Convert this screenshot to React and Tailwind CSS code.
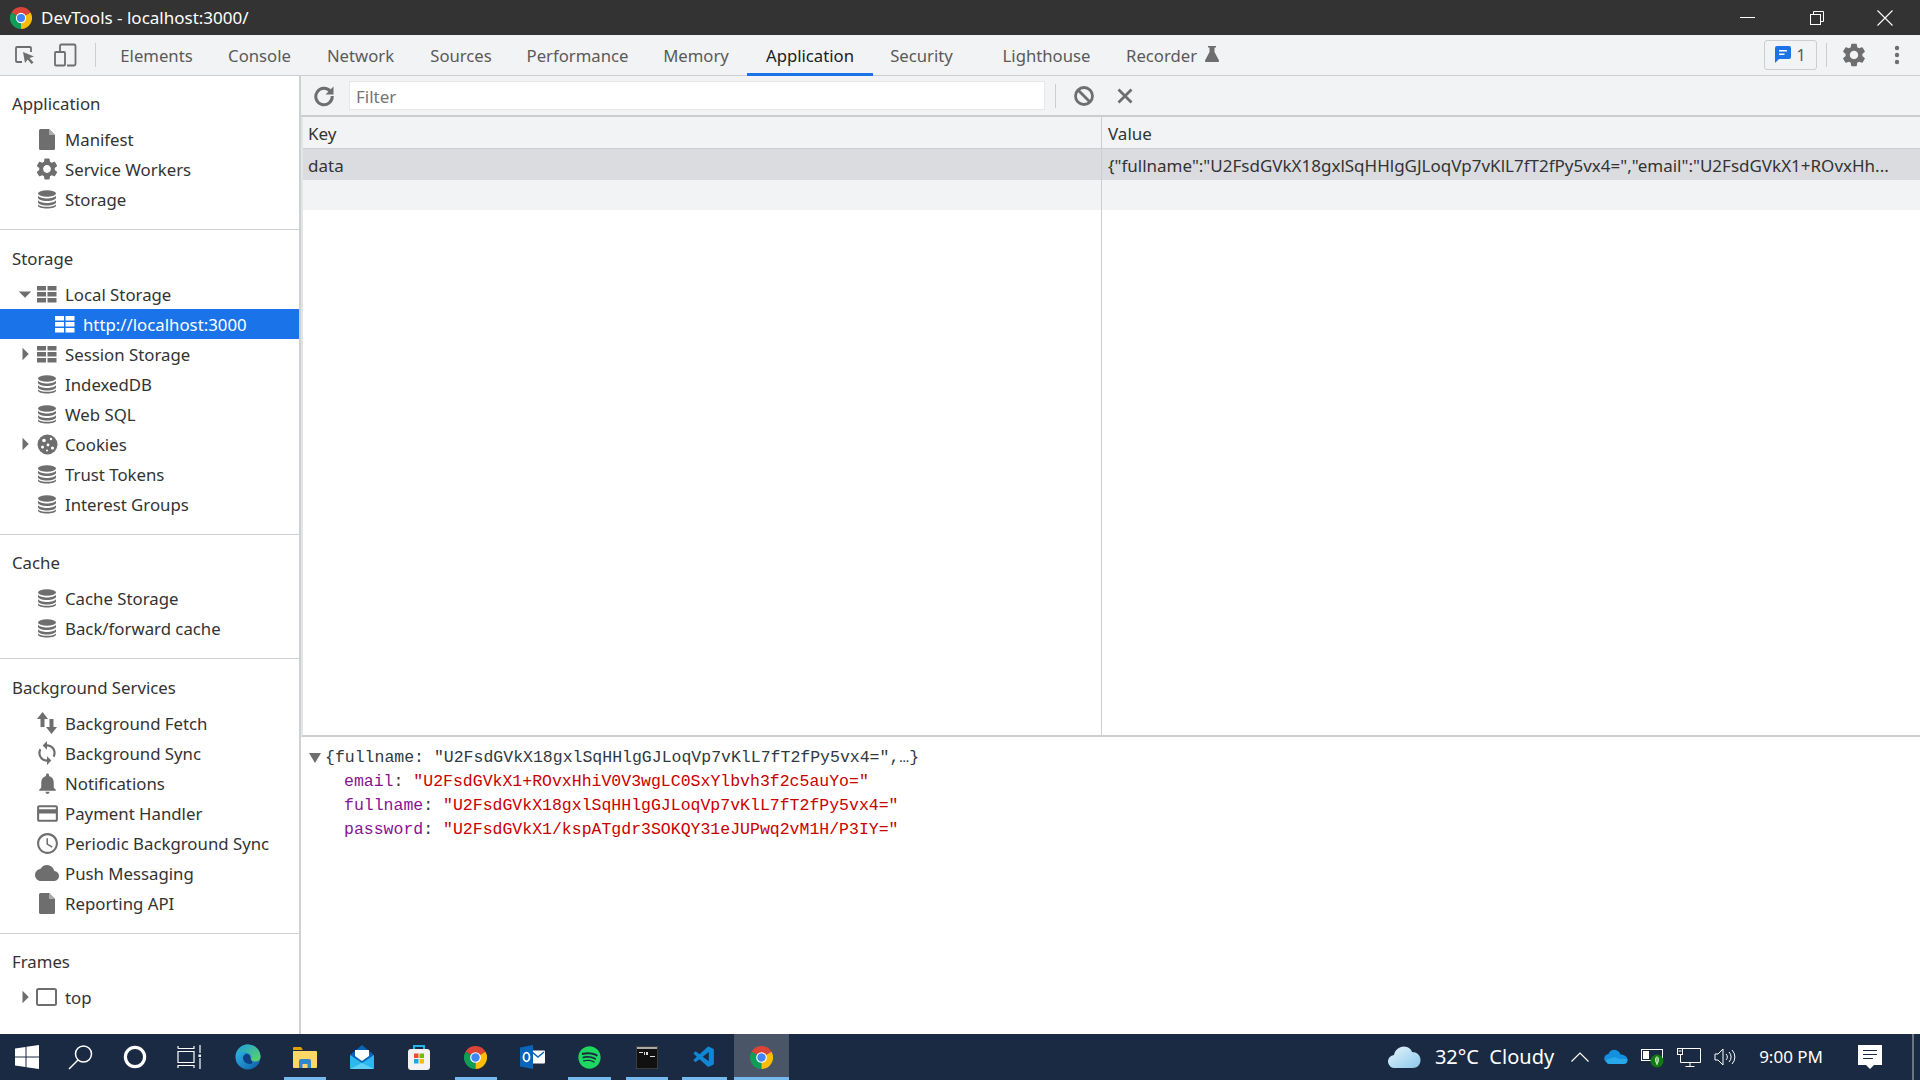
import React from "react";
import { MdSettings, MdSync, MdNotifications, MdOutlineCreditCard, MdAccessTime, MdCloud, MdArrowDropDown, MdArrowRight } from "react-icons/md";
import { FaSpotify } from "react-icons/fa";
import { VscVscode } from "react-icons/vsc";

const G = "#6e6e6e";
const Db = ({ c = G }) => (
  <svg width="20" height="20" viewBox="0 0 20 20" fill={c}>
    <ellipse cx="10" cy="4.5" rx="9" ry="3.2" />
    <path d="M1 6.8v2c0 1.8 4 3.2 9 3.2s9-1.4 9-3.2v-2c-1.2 1.7-5 2.7-9 2.7s-7.800-1-9-2.700z" />
    <path d="M1 11.300v2c0 1.800 4 3.200 9 3.200s9-1.400 9-3.200v-2c-1.200 1.700-5 2.700-9 2.700s-7.800-1-9-2.700z" />
    <path d="M1 15.500v1c0 1.800 4 3 9 3s9-1.200 9-3v-1c-1.200 1.500-5 2.300-9 2.300s-7.800-.8-9-2.300z" />
  </svg>
);
const Tbl = ({ c = G }) => (
  <svg width="20" height="18" viewBox="0 0 20 18" fill={c}>
    <rect x="0" y="1" width="9" height="4.500" /><rect x="10.500" y="1" width="9" height="4.500" />
    <rect x="0" y="7" width="9" height="4.500" /><rect x="10.500" y="7" width="9" height="4.500" />
    <rect x="0" y="13" width="9" height="4.500" /><rect x="10.500" y="13" width="9" height="4.500" />
  </svg>
);
const Cookie = () => (
  <svg width="21" height="21" viewBox="0 0 21 21">
    <circle cx="10.500" cy="10.500" r="10" fill={G} />
    <circle cx="7" cy="6.500" r="1.800" fill="#fff" /><circle cx="14" cy="5" r="1.200" fill="#fff" />
    <circle cx="5.500" cy="13" r="1.500" fill="#fff" /><circle cx="11" cy="11" r="1.400" fill="#fff" />
    <circle cx="15.500" cy="14" r="1.600" fill="#fff" /><circle cx="10" cy="16.500" r="1" fill="#fff" />
  </svg>
);
const Frame = () => (
  <svg width="21" height="18" viewBox="0 0 21 18" fill="none" stroke={G} strokeWidth="2" className="-ml-[1px]">
    <rect x="1" y="1" width="19" height="16" rx="1.500" />
  </svg>
);
const FileIc = () => (
  <svg width="16" height="21" viewBox="0 0 16 21" fill={G}><path d="M1.500 0H10l6 6v13.500a1.500 1.500 0 0 1-1.500 1.500h-13A1.500 1.500 0 0 1 0 19.500v-18A1.500 1.500 0 0 1 1.500 0z" /><path d="M10 0v6h6z" fill="#aaa" /></svg>
);
const Swap = () => (
  <svg width="20" height="22" viewBox="0 0 20 22" fill={G}>
    <path d="M5.500 0L11 7H7.500v8h-4V7H0zM14.500 22L9 15h3.500V7h4v8H20z" />
  </svg>
);
const Mi = ({ I, size = 22 }) => <I size={size} color={G} />;

const sections = [
  { title: "Application", pt: "pt-[13px]", pb: "pb-[15px]", gap: "mt-[5px]", rows: [
    { t: "Manifest", i: <FileIc /> },
    { t: "Service Workers", i: <Mi I={MdSettings} size={26} /> },
    { t: "Storage", i: <Db /> },
  ]},
  { title: "Storage", pt: "pt-[14px]", pb: "pb-[15px]", gap: "mt-[5px]", rows: [
    { t: "Local Storage", i: <Tbl />, a: "down" },
    { t: "http://localhost:3000", i: <Tbl c="#fff" />, sel: true },
    { t: "Session Storage", i: <Tbl />, a: "right" },
    { t: "IndexedDB", i: <Db /> },
    { t: "Web SQL", i: <Db /> },
    { t: "Cookies", i: <Cookie />, a: "right" },
    { t: "Trust Tokens", i: <Db /> },
    { t: "Interest Groups", i: <Db /> },
  ]},
  { title: "Cache", pt: "pt-[13px]", pb: "pb-[15px]", gap: "mt-[5px]", rows: [
    { t: "Cache Storage", i: <Db /> },
    { t: "Back/forward cache", i: <Db /> },
  ]},
  { title: "Background Services", pt: "pt-[14px]", pb: "pb-[15px]", gap: "mt-[5px]", rows: [
    { t: "Background Fetch", i: <Swap /> },
    { t: "Background Sync", i: <Mi I={MdSync} size={26} /> },
    { t: "Notifications", i: <Mi I={MdNotifications} size={25} /> },
    { t: "Payment Handler", i: <Mi I={MdOutlineCreditCard} size={25} /> },
    { t: "Periodic Background Sync", i: <Mi I={MdAccessTime} size={25} /> },
    { t: "Push Messaging", i: <Mi I={MdCloud} size={24} /> },
    { t: "Reporting API", i: <FileIc /> },
  ]},
  { title: "Frames", pt: "pt-[13px]", pb: "", gap: "mt-[5px]", last: true, rows: [
    { t: "top", i: <Frame />, a: "right" },
  ]},
];

const Row = ({ r }) => (
  <div className={`flex items-center h-[30px] text-[16.800px] whitespace-nowrap ${r.sel ? "bg-[#1a73e8] text-white" : "text-[#333]"}`}>
    <div className="w-[36px] flex justify-end shrink-0">
      {r.a === "down" && <MdArrowDropDown size={30} color={G} className="-mr-[4px]" />}
      {r.a === "right" && <MdArrowRight size={30} color={G} className="-mr-[4px]" />}
    </div>
    <div className={`w-[22px] flex justify-center items-center shrink-0 [&>svg]:shrink-0 ${r.sel ? "ml-[18px]" : ""}`}>{r.i}</div>
    <span className="ml-[7px] pt-[1px]">{r.t}</span>
  </div>
);

const Section = ({ s }) => (
  <div className={`${s.pt} ${s.pb} ${s.last ? "" : "border-b border-[#cfd0d3]"}`}>
    <div className="h-[30px] flex items-center pl-[12px] text-[16.800px] text-[#333]">{s.title}</div>
    <div className={s.gap}>{s.rows.map((r) => <Row key={r.t} r={r} />)}</div>
  </div>
);

const Chrome = ({ size = 24 }) => (
  <svg width={size} height={size} viewBox="0 0 24 24">
    <path d="M12 12L1.600 6A12 12 0 0 1 22.400 6z" fill="#db4437" />
    <path d="M12 12L12 24A12 12 0 0 1 1.600 6z" fill="#0f9d58" />
    <path d="M12 12L22.400 6A12 12 0 0 1 12 24z" fill="#fbbc05" />
    <circle cx="12" cy="12" r="5.600" fill="#fff" />
    <circle cx="12" cy="12" r="4.400" fill="#4285f4" />
  </svg>
);

const tabs = [
  ["Elements", "w-[107px]"], ["Console", "w-[99px]"], ["Network", "w-[103px]"], ["Sources", "w-[98px]"],
  ["Performance", "w-[135px]"], ["Memory", "w-[102px]"], ["Application", "w-[126px]"], ["Security", "w-[97px]"],
  ["Lighthouse", "w-[153px]"],
];

const Tab = ({ t, w }) => (
  <div className={`${w} h-full flex items-center justify-center relative text-[16.700px] pt-[1px] ${t === "Application" ? "text-[#202124]" : "text-[#5a5a5a]"}`}>
    {t}
    {t === "Application" && <div className="absolute left-0 right-0 -bottom-px h-[3px] bg-[#1a73e8]" />}
  </div>
);

const Slot = ({ children, line, active, w = "w-[57px]" }) => (
  <div className={`${w} h-full flex items-center justify-center relative shrink-0 ${active ? "bg-[#4a5568]" : ""}`}>
    {children}
    {line && <div className={`absolute bottom-0 h-[3px] bg-[#76b9ed] ${line}`} />}
  </div>
);

const Key = ({ k, v }) => (
  <div className="h-[24px] flex items-center pl-[43px] whitespace-pre">
    <span className="text-[#881391]">{k}</span><span className="text-[#303942]">: </span><span className="text-[#c80000]">{v}</span>
  </div>
);

export default function App() {
  return (
    <div className="w-[1920px] h-[1080px] overflow-hidden flex flex-col bg-white font-['Noto_Sans',sans-serif]">
      {/* Title bar */}
      <div className="h-[35px] shrink-0 bg-[#333333] flex items-center text-white relative">
        <div className="ml-[10px] flex"><Chrome size={22} /></div>
        <span className="ml-[9px] text-[17px]">DevTools - localhost:3000/</span>
        <div className="ml-auto flex items-center h-full">
          <div className="w-[15px] h-px bg-white mr-[54px]" />
          <svg width="16" height="16" viewBox="0 0 16 16" fill="none" stroke="#fff" className="mr-[52px]">
            <rect x="1.500" y="4.500" width="10" height="10" /><path d="M4.500 4.500V1.500h10v10h-3" />
          </svg>
          <svg width="16" height="16" viewBox="0 0 16 16" stroke="#fff" strokeWidth="1.100" className="mr-[27px]"><path d="M.5.5l15 15M15.500.5l-15 15" /></svg>
        </div>
      </div>
      {/* Toolbar */}
      <div className="h-[41px] shrink-0 bg-[#f1f3f4] border-b border-[#cbcdd1] flex items-center">
        <svg width="22" height="22" viewBox="0 0 22 22" className="ml-[14px]" fill="none">
          <path d="M8 18H3a1 1 0 0 1-1-1V4a1 1 0 0 1 1-1h13a1 1 0 0 1 1 1v4" stroke={G} strokeWidth="1.800" />
          <path d="M9 8l11 4.500-4.500 1.500 4 4.500-2 1.500-3.800-4.500L11 19z" fill={G} />
        </svg>
        <svg width="24" height="24" viewBox="0 0 24 24" className="ml-[17px]" fill="none" stroke={G} strokeWidth="1.800">
          <path d="M7 8V3a1.500 1.500 0 0 1 1.500-1.500H21A1.500 1.500 0 0 1 22.500 3v18a1.500 1.500 0 0 1-1.500 1.500H14" />
          <rect x="2" y="9" width="10" height="13.500" rx="1" />
        </svg>
        <div className="w-px h-[24px] bg-[#cbcdd1] ml-[18px] mr-[7px]" />
        <div className="flex h-full items-center">
          {tabs.map(([t, w]) => <Tab key={t} t={t} w={w} />)}
          <div className="w-[120px] h-full flex items-center pl-[3px] pt-[1px] text-[16.700px] text-[#5a5a5a]">
            Recorder
            <svg width="14" height="16" viewBox="0 0 14 16" fill={G} className="ml-[8px] -mt-[3px] shrink-0"><path d="M3 0h8v1.500H9.500v4.500L14 14.500A1 1 0 0 1 13 16H1a1 1 0 0 1-1-1.500L4.500 6V1.500H3z" /></svg>
          </div>
        </div>
        <div className="ml-auto h-[30px] w-[53px] border border-[#cbcdd1] rounded-[3px] flex items-center justify-center gap-[5px] text-[#5a5a5a] text-[16px]">
          <svg width="16" height="18" viewBox="0 0 16 18" fill="#1a73e8"><path d="M2 0h12a2 2 0 0 1 2 2v9a2 2 0 0 1-2 2H4l-4 4V2a2 2 0 0 1 2-2z" /><path d="M4 4h8v1.500H4zM4 7.500h5.500V9H4z" fill="#fff" /></svg>
          1
        </div>
        <div className="w-px h-[24px] bg-[#cbcdd1] ml-[9px]" />
        <MdSettings size={28} color={G} className="ml-[13px]" />
        <svg width="6" height="20" viewBox="0 0 6 20" fill={G} className="ml-[26px] mr-[20px]"><circle cx="3" cy="3" r="2.200" /><circle cx="3" cy="10" r="2.200" /><circle cx="3" cy="17" r="2.200" /></svg>
      </div>
      {/* Main */}
      <div className="flex-1 flex min-h-0">
        <div className="w-[301px] shrink-0 border-r-2 border-[#cfd0d3] overflow-hidden">
          {sections.map((s) => <Section key={s.title} s={s} />)}
        </div>
        <div className="flex-1 min-w-0 flex flex-col">
          <div className="h-[41px] shrink-0 bg-[#f1f3f4] border-b-2 border-[#cbcdd1] flex items-center text-[#5a5a5a]">
            <svg width="22" height="22" viewBox="0 0 22 22" fill="none" className="ml-[12px] shrink-0">
              <path d="M17.500 6.500A8.200 8.200 0 1 0 19.200 11" stroke={G} strokeWidth="3" />
              <path d="M20.500 1.500V9.500H12.500z" fill={G} />
            </svg>
            <div className="ml-[14px] w-[696px] h-[29px] bg-white border border-[#e6e7e9] flex items-center pl-[6px] pt-[2px] text-[17px] text-[#757575]">Filter</div>
            <div className="w-px h-[24px] bg-[#cbcdd1] ml-[10px]" />
            <svg width="22" height="22" viewBox="0 0 22 22" fill="none" stroke={G} strokeWidth="2.800" className="ml-[17px] shrink-0">
              <circle cx="11" cy="11" r="8.500" /><path d="M5 5l12 12" />
            </svg>
            <svg width="16" height="16" viewBox="0 0 16 16" stroke={G} strokeWidth="2.800" className="ml-[22px] shrink-0"><path d="M1.500 1.500l13 13M14.500 1.500l-13 13" /></svg>
          </div>
          <div className="h-[620px] shrink-0 border-b-2 border-[#cbcdd1] border-l-2 border-l-[#e4e5e7] flex flex-col text-[17px] text-[#333]">
            <div className="h-[32px] bg-[#f1f3f4] border-b border-[#cbcdd1] flex items-center shrink-0">
              <div className="w-[799px] pl-[5px] pt-[2px] border-r border-[#cbcdd1] h-full flex items-center">Key</div>
              <div className="pl-[6px] pt-[2px]">Value</div>
            </div>
            <div className="h-[31px] bg-[#dadce0] flex items-center shrink-0 whitespace-nowrap overflow-hidden">
              <div className="w-[799px] pl-[5px] pt-[2px] border-r border-[#cbcdd1] h-full flex items-center shrink-0">data</div>
              <div className="pl-[6px] pt-[2px]">{`{"fullname":"U2FsdGVkX18gxlSqHHlgGJLoqVp7vKlL7fT2fPy5vx4=","email":"U2FsdGVkX1+ROvxHh...`}</div>
            </div>
            <div className="h-[30px] bg-[#f1f3f4] flex shrink-0">
              <div className="w-[799px] border-r border-[#cbcdd1]" />
            </div>
            <div className="flex-1 flex"><div className="w-[799px] border-r border-[#cbcdd1]" /></div>
          </div>
          <div className="flex-1 pt-[9px] font-['Liberation_Mono',monospace] text-[16.500px] text-[#303942]">
            <div className="h-[24px] flex items-center whitespace-pre">
              <svg width="12" height="10" viewBox="0 0 12 10" fill={G} className="ml-[8px] mr-[4px]"><path d="M0 0h12L6 10z" /></svg>
              {`{fullname: "U2FsdGVkX18gxlSqHHlgGJLoqVp7vKlL7fT2fPy5vx4=",…}`}
            </div>
            <Key k="email" v={`"U2FsdGVkX1+ROvxHhiV0V3wgLC0SxYlbvh3f2c5auYo="`} />
            <Key k="fullname" v={`"U2FsdGVkX18gxlSqHHlgGJLoqVp7vKlL7fT2fPy5vx4="`} />
            <Key k="password" v={`"U2FsdGVkX1/kspATgdr3SOKQY31eJUPwq2vM1H/P3IY="`} />
          </div>
        </div>
      </div>
      {/* Taskbar */}
      <div className="h-[46px] shrink-0 bg-[#1a2a42] flex items-center text-white">
        <Slot w="w-[54px]">
          <svg width="24" height="24" viewBox="0 0 24 24" fill="#fff"><path d="M0 3.500l10.500-1.500v9.500H0zM11.500 1.800L24 0v11.500H11.500zM0 12.500h10.500V22L0 20.500zM11.500 12.500H24V24l-12.500-1.800z" /></svg>
        </Slot>
        <Slot w="w-[54px]">
          <svg width="26" height="26" viewBox="0 0 26 26" fill="none" stroke="#fff" strokeWidth="1.500"><circle cx="15.500" cy="10" r="8" /><path d="M10 16L1 25" /></svg>
        </Slot>
        <Slot w="w-[54px]">
          <svg width="24" height="24" viewBox="0 0 24 24" fill="none" stroke="#fff" strokeWidth="3.200"><circle cx="12" cy="12" r="9.600" /></svg>
        </Slot>
        <Slot w="w-[54px]">
          <svg width="24" height="24" viewBox="0 0 24 24" fill="none" stroke="#fff" strokeWidth="1.200"><path d="M1 3.500V1M17 1v2.500H1M1 6.500h16v11H1zM1 23v-2.500h16V23M23 0v8M23 13v11" /><rect x="21.500" y="9.500" width="3" height="2.500" fill="#fff" stroke="none" /></svg>
        </Slot>
        <div className="w-[3px] shrink-0" />
        <Slot>
          <svg width="26" height="26" viewBox="0 0 26 26">
            <defs>
              <linearGradient id="edgeA" x1="0" y1="0" x2="1" y2="1"><stop offset="0" stopColor="#35c1f1" /><stop offset="1" stopColor="#0c59a4" /></linearGradient>
              <linearGradient id="edgeB" x1="0" y1="0" x2="1" y2="1"><stop offset="0" stopColor="#1b9de2" /><stop offset="1" stopColor="#5fd65f" /></linearGradient>
            </defs>
            <circle cx="13" cy="13" r="12.500" fill="url(#edgeA)" />
            <path d="M1 10C3 3 8 .5 13 .5c7 0 12.500 5.500 12.500 12 0 3-2 5-5.500 5-3 0-5-1-5-2.500 2-1 2-3-.5-5C11 7.500 5 6 1 10z" fill="url(#edgeB)" />
            <path d="M8 14c0-3 3-5 5-4 3 1 2 5 4 7 1 1.500 0 3-2 3-4 0-7-3-7-6z" fill="#0f3f86" />
          </svg>
        </Slot>
        <Slot line="w-[42px]">
          <svg width="24" height="23" viewBox="0 0 24 23">
            <path d="M0 2a1 1 0 0 1 1-1h7l2 3H0z" fill="#e0a000" />
            <path d="M0 5h23a1 1 0 0 1 1 1v15a1 1 0 0 1-1 1H1a1 1 0 0 1-1-1z" fill="#fcd767" />
            <path d="M6 22v-7a2 2 0 0 1 2-2h8a2 2 0 0 1 2 2v7h-3.500v-4h-5v4z" fill="#2f88d0" />
          </svg>
        </Slot>
        <Slot>
          <svg width="24" height="24" viewBox="0 0 24 24">
            <path d="M12 0L24 10v13H0V10z" fill="#0a64b8" />
            <path d="M5 5h14v6l-7 5-7-5z" fill="#fff" />
            <path d="M0 10l12 8 12-8v13a1 1 0 0 1-1 1H1a1 1 0 0 1-1-1z" fill="#2cb7ee" />
            <path d="M0 24l12-6 12 6z" fill="#5fd0f5" />
          </svg>
        </Slot>
        <Slot>
          <svg width="24" height="27" viewBox="0 0 24 27">
            <path d="M7 6V2h10v4" fill="none" stroke="#22b5ea" strokeWidth="2" />
            <rect x="1" y="5" width="22" height="21" rx="3" fill="#f2f2f2" />
            <rect x="7" y="9.500" width="4.500" height="4.500" fill="#e8502f" /><rect x="12.500" y="9.500" width="4.500" height="4.500" fill="#76b900" />
            <rect x="7" y="15" width="4.500" height="4.500" fill="#1ca4e8" /><rect x="12.500" y="15" width="4.500" height="4.500" fill="#fbb900" />
          </svg>
        </Slot>
        <Slot line="w-[42px]"><Chrome size={23} /></Slot>
        <Slot>
          <svg width="25" height="24" viewBox="0 0 25 24">
            <rect x="11" y="5.500" width="14" height="13" rx="1" fill="#fff" />
            <path d="M12 7l6 5 6-5" fill="none" stroke="#0a64b8" strokeWidth="1.500" />
            <path d="M0 2.500L13 0v24L0 21.500z" fill="#0a64b8" />
            <ellipse cx="6.500" cy="12" rx="3" ry="4.300" fill="none" stroke="#fff" strokeWidth="1.800" />
          </svg>
        </Slot>
        <Slot line="w-[43px]"><FaSpotify size={23} color="#1ed760" /></Slot>
        <Slot line="w-[42px]">
          <svg width="22" height="23" viewBox="0 0 22 23">
            <rect width="22" height="23" rx="1" fill="#111" stroke="#666" />
            <rect x="1" y="1" width="20" height="2" fill="#aaa" />
            <path d="M3 6h4v1H3zM8 6h1v3H8zM10 6h2v3h-2zM14 10h5v1h-5z" fill="#ddd" />
          </svg>
        </Slot>
        <Slot w="w-[59px]" line="w-[45px]"><VscVscode size={25} color="#0e87d6" /></Slot>
        <Slot w="w-[55px]" active line="w-full"><Chrome size={23} /></Slot>
        {/* Tray */}
        <div className="ml-auto flex items-center h-full">
          <svg width="33" height="24" viewBox="0 0 33 24" className="mr-[14px]">
            <defs><linearGradient id="cl" x1="0" y1="0" x2="1" y2="1"><stop offset="0" stopColor="#e6f5fd" /><stop offset="1" stopColor="#8cc8ea" /></linearGradient></defs>
            <path d="M7 23a6.500 6.500 0 0 1-1-13C7 4 13 0 19 2c3 1 4.500 3 5 5 5 0 8.500 3.500 8.500 8s-3 8-8 8z" fill="url(#cl)" />
          </svg>
          <span className="text-[20px] mr-[17px] whitespace-pre">32°C  Cloudy</span>
          <svg width="18" height="10" viewBox="0 0 18 10" fill="none" stroke="#fff" strokeWidth="1.200" className="mr-[15px]"><path d="M.5 9.500L9 1l8.500 8.500" /></svg>
          <svg width="24" height="16" viewBox="0 0 24 16" className="mr-[13px]">
            <path d="M5 14a4.500 4.500 0 0 1-.5-9C6 1 10 0 13 1.500c2 1 3 2.500 3.500 4 4 0 7 2.500 7 5 0 2-1 3.500-3.500 3.500z" fill="#1490df" />
            <path d="M2 11l8-3 6 2 7 0c1 2 0 5-3 5H5c-2 0-3-2-3-4z" fill="#28a8ea" />
          </svg>
          <svg width="24" height="22" viewBox="0 0 24 22" className="mr-[12px]">
            <rect x=".5" y="3.500" width="21" height="11" fill="none" stroke="#fff" />
            <rect x="2" y="5" width="6" height="8" fill="#fff" />
            <circle cx="16" cy="15" r="6.500" fill="#107c10" />
            <path d="M16 10.500c2 1.500 2 5 0 7-2-2-2-5.500 0-7zM16 12v7" fill="none" stroke="#fff" strokeWidth=".9" />
          </svg>
          <svg width="24" height="21" viewBox="0 0 24 21" fill="none" stroke="#fff" className="mr-[13px]">
            <rect x=".5" y="1.500" width="5" height="6" /><path d="M5.500 1.500h18v14H3.500V7.500M13 15.500v4M8.500 19.500h9M1.500 4h3" />
          </svg>
          <svg width="22" height="18" viewBox="0 0 22 18" fill="none" stroke="#fff" className="mr-[23px]">
            <path d="M1 6h3l5-5v16l-5-5H1zM12 6a4 4 0 0 1 0 6M15 4a7 7 0 0 1 0 10M18 2a10 10 0 0 1 0 14" />
          </svg>
          <span className="text-[17px] mr-[35px] whitespace-nowrap">9:00 PM</span>
          <svg width="24" height="24" viewBox="0 0 24 24" className="mr-[30px]">
            <path d="M0 0h24v20h-8l-4 4-4-4H0z" fill="#fff" />
            <path d="M5 5.500h14M5 9.500h14M5 13.500h10" stroke="#1a2a42" strokeWidth="1" />
          </svg>
          <div className="w-[2px] h-full bg-[#6b7480] mr-[6px]" />
        </div>
      </div>
    </div>
  );
}
